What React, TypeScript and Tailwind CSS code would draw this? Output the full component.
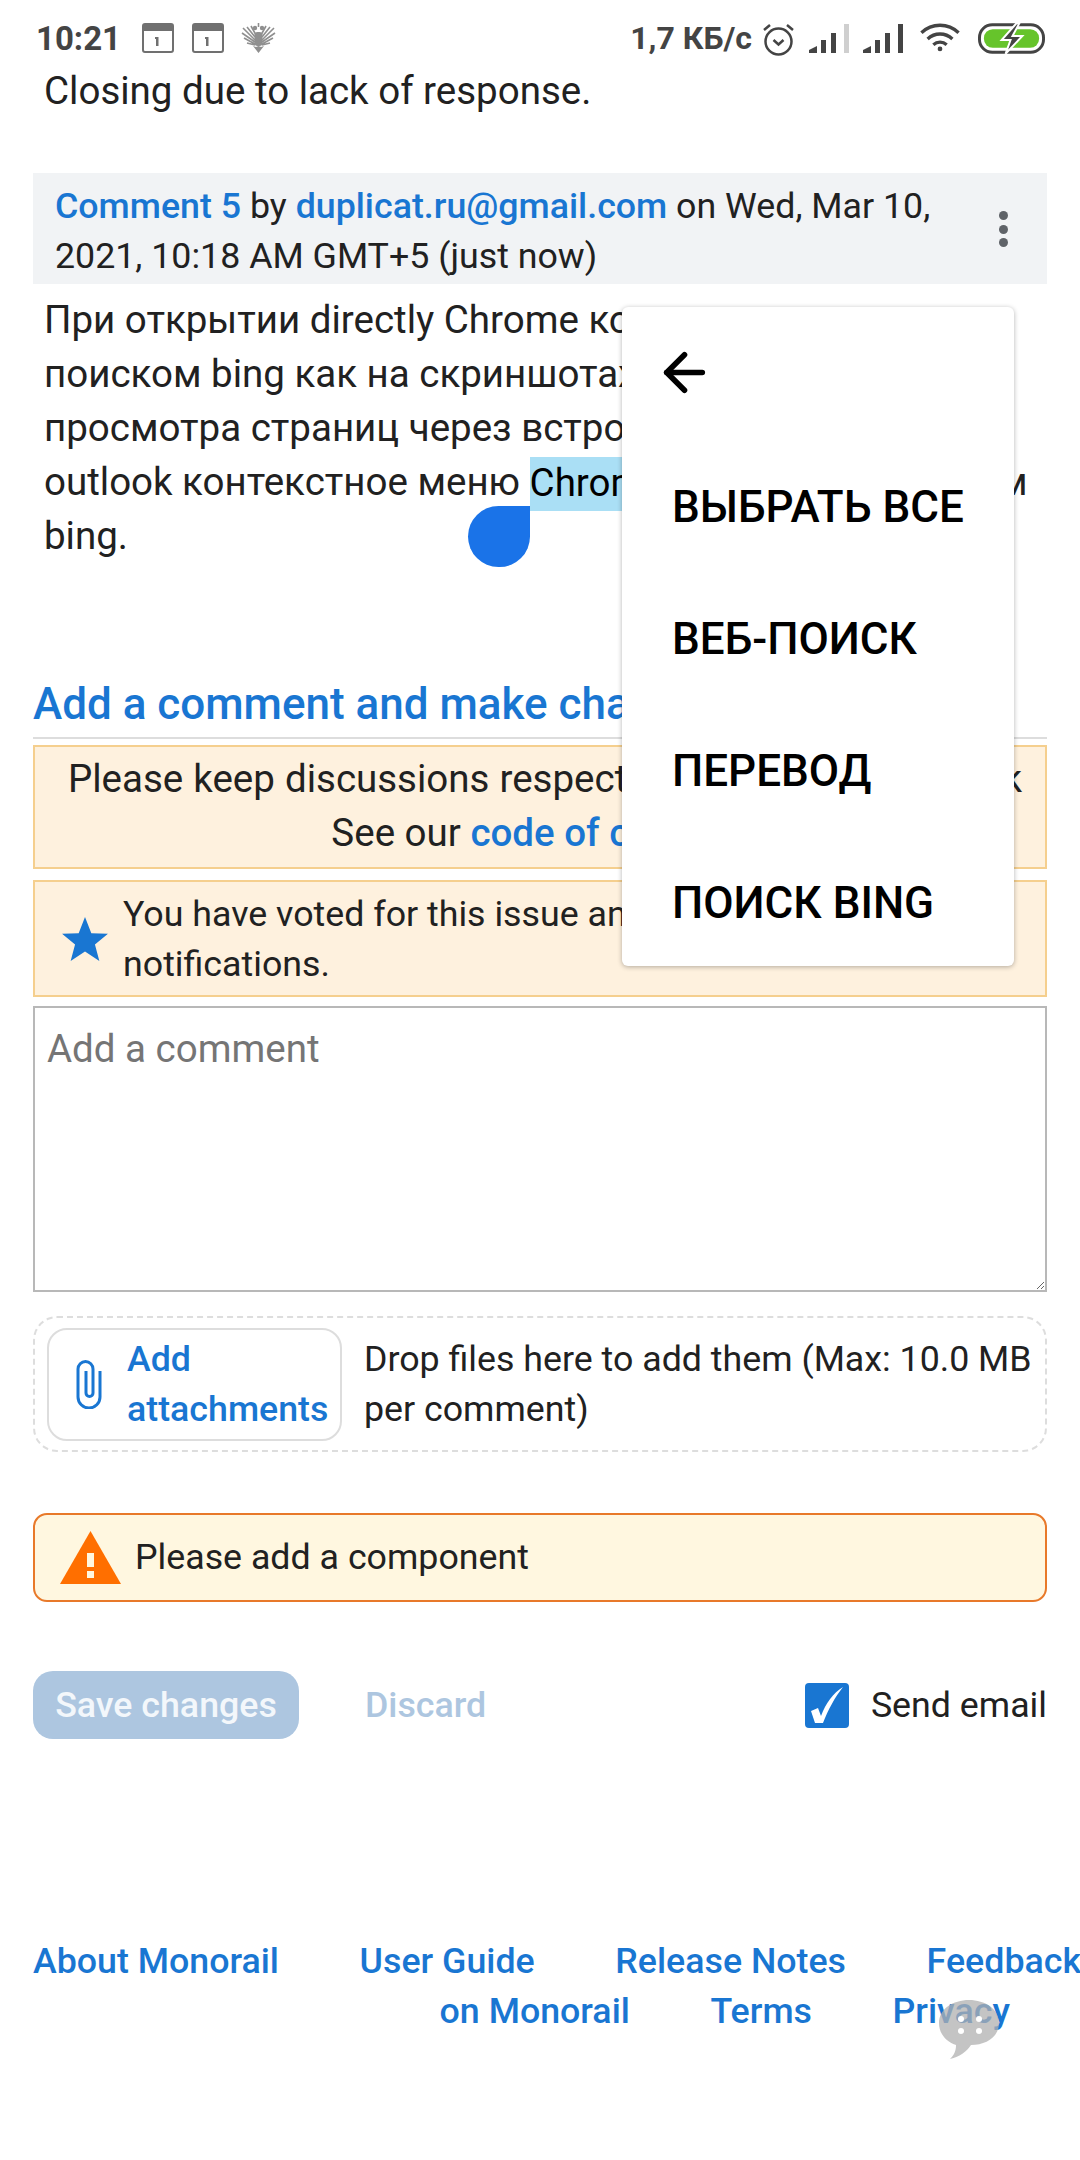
import { ArrowLeft } from "lucide-react";

const menuItems = ["ВЫБРАТЬ ВСЕ", "ВЕБ-ПОИСК", "ПЕРЕВОД", "ПОИСК BING"];

function CalendarIcon() {
  return (
    <svg width="32" height="30" viewBox="0 0 32 30">
      <rect x="1" y="1" width="30" height="28" rx="2" fill="none" stroke="#707070" strokeWidth="2" />
      <rect x="1" y="1" width="30" height="7" fill="#707070" />
      <path d="M13 14h3.500v9h-2.500v-7h-1z" fill="#707070" />
    </svg>
  );
}

function EagleIcon() {
  return (
    <svg width="35" height="30" viewBox="0 0 35 30" fill="none" stroke="#8f8f8f" strokeWidth="1.600">
      <path d="M14 17L2 5M14 19L1 10M14 21L3 15M14 22L6 20M14 14L6 4M15 12L10 3" />
      <path d="M21 17L33 5M21 19L34 10M21 21L32 15M21 22L29 20M21 14L29 4M20 12L25 3" />
      <rect x="13.500" y="9" width="8" height="14" rx="3" fill="#8f8f8f" stroke="none" />
      <circle cx="14" cy="5" r="2.200" fill="#8f8f8f" stroke="none" />
      <circle cx="21" cy="5" r="2.200" fill="#8f8f8f" stroke="none" />
      <path d="M17.500 0v4" />
      <path d="M12 23l5.500 7 5.500-7-3 1-2.500-1-2.500 1z" fill="#8f8f8f" stroke="none" />
    </svg>
  );
}

function AlarmIcon() {
  return (
    <svg width="33" height="33" viewBox="0 0 33 33" fill="none" stroke="#444" strokeWidth="2.500">
      <circle cx="16.500" cy="18.500" r="13" />
      <path d="M11.500 17l5 4.500 5-4.500" />
      <path d="M2 7l6-5M31 7l-6-5" />
    </svg>
  );
}

function SignalIcon({ faded }: { faded?: boolean }) {
  return (
    <svg width="40" height="29" viewBox="0 0 40 29" fill="#444">
      <path d="M0 29v-3l8-4v7z" />
      <rect x="12" y="16" width="5" height="13" />
      <rect x="22" y="9" width="5" height="20" />
      <rect x="35" y="0" width="5" height="29" fill={faded ? "#cfcfcf" : "#444"} />
    </svg>
  );
}

function WifiIcon() {
  return (
    <svg width="40" height="31" viewBox="0 0 42 32" fill="none" stroke="#444" strokeWidth="3.500">
      <path d="M1.500 10c11-10.500 28-10.500 39 0" />
      <path d="M8 16.500c7.500-7 18.500-7 26 0" />
      <path d="M14 22.500c4-3.500 10-3.500 14 0" />
      <circle cx="21" cy="27" r="2.500" fill="#444" stroke="none" />
    </svg>
  );
}

function BatteryIcon() {
  return (
    <svg width="67" height="31" viewBox="0 0 68 31">
      <rect x="1.500" y="1.500" width="65" height="28" rx="13" fill="none" stroke="#444" strokeWidth="3" />
      <rect x="6" y="6" width="56" height="19" rx="9" fill="#66c42b" />
      <path d="M39 0L24 17h9l-5 14 17-18h-10l7-13z" fill="#444" stroke="#fff" strokeWidth="2" />
    </svg>
  );
}

function StatusBar() {
  return (
    <div className="h-[64px] flex items-start pt-[23px] pl-[36px] pr-[35px] text-[#444]">
      <span className="text-[33px] leading-[31px] font-bold w-[106px]">10:21</span>
      <div className="flex gap-[18px]">
        <CalendarIcon />
        <CalendarIcon />
      </div>
      <div className="ml-[17px]">
        <EagleIcon />
      </div>
      <span className="ml-auto text-[32px] leading-[31px] font-bold">1,7 КБ/с</span>
      <div className="ml-[10px] flex">
        <AlarmIcon />
        <div className="ml-[14px] flex gap-[14px] pt-[1px]">
          <SignalIcon faded />
          <SignalIcon />
        </div>
        <div className="ml-[17px]">
          <WifiIcon />
        </div>
        <div className="ml-[18px]">
          <BatteryIcon />
        </div>
      </div>
    </div>
  );
}

export default function App() {
  return (
    <div className="relative w-[1080px] h-[2160px] overflow-hidden bg-white text-[#212121] font-['Roboto',sans-serif] text-[35.75px]">
      <StatusBar />

      <div className="px-[33px]">
        <p className="pl-[11px] text-[38.5px] leading-[54px]">Closing due to lack of response.</p>

        {/* comment header */}
        <div className="mt-[55px] h-[111px] bg-[#f1f3f5] pt-[8px] pl-[22px] flex items-start leading-[50px]">
          <div className="whitespace-nowrap">
            <a className="text-[#1976d2] font-medium">Comment 5</a> by{" "}
            <a className="text-[#1976d2] font-medium">duplicat.ru@gmail.com</a> on Wed, Mar 10,
            <br />
            2021, 10:18 AM GMT+5 (just now)
          </div>
          <div className="ml-auto mr-[39px] mt-[30px] flex flex-col gap-[4.500px]">
            <span className="w-[9px] h-[9px] rounded-full bg-[#5f6368]" />
            <span className="w-[9px] h-[9px] rounded-full bg-[#5f6368]" />
            <span className="w-[9px] h-[9px] rounded-full bg-[#5f6368]" />
          </div>
        </div>

        {/* comment body */}
        <div className="mt-[9px] pl-[11px] text-[38.5px] leading-[54px] whitespace-nowrap">
          При открытии directly Chrome контекстное меню с
          <br />
          поиском bing как на скриншотах, но при
          <br />
          просмотра страниц через встроенный в
          <br />
          outlook контекстное меню{" "}
          <span className="bg-[#aadff5] pt-[2.500px] pb-[6.500px] text-black">Chrome</span> то снова с поиском
          <br />
          bing.
        </div>

        <h2 className="mt-[116px] border-b-2 border-[#dddddd] pb-[8px] text-[44px] leading-[50px] font-medium text-[#1976d2] whitespace-nowrap">
          Add a comment and make changes
        </h2>

        <div className="mt-[6px] h-[124px] border-2 border-[#f5cf8e] bg-[#fef1de] pt-[5px] text-center text-[38.5px] leading-[54px] whitespace-nowrap">
          <span className="inline-block pl-[10px] [word-spacing:0.5px]">Please keep discussions respectful and always on track</span>
          <br />
          See our <a className="text-[#1976d2] font-medium">code of conduct</a>
        </div>

        <div className="mt-[11px] h-[117px] border-2 border-[#f5cf8e] bg-[#fef1de] flex items-center pl-[27px] gap-[15px] leading-[50px]">
          <svg width="46" height="44" viewBox="0 0 24 23" fill="#1976d2" className="shrink-0">
            <path d="M12 0l3.300 8.500 8.700.3-6.800 5.600 2.300 8.600-7.500-5-7.500 5 2.300-8.600L0 8.800l8.700-.3z" />
          </svg>
          <div className="whitespace-nowrap">
            You have voted for this issue and will receive
            <br />
            notifications.
          </div>
        </div>

        <textarea
          readOnly
          placeholder="Add a comment"
          className="mt-[9px] block w-full h-[286px] border-2 border-[#b8b8b8] px-[12px] pt-[19px] pb-[8px] text-[38.5px] leading-[44px] placeholder:text-[#757575]"
        />

        <div className="mt-[24px] h-[136px] border-2 border-dashed border-[#dddddd] rounded-[24px] flex items-center pl-[12px] gap-[22px] leading-[50px]">
          <button className="w-[295px] h-[113px] shrink-0 border-2 border-[#dddddd] rounded-[20px] flex items-center pl-[27px] gap-[25px] text-left text-[#1976d2] font-medium">
            <svg width="26" height="50" viewBox="0 0 26 50" fill="none" stroke="#1976d2" strokeWidth="3" className="shrink-0">
              <path d="M24 12v26a11 11 0 0 1-22 0V10a7.500 7.500 0 0 1 15 0v24a3.500 3.500 0 0 1-7 0V12" />
            </svg>
            <span>
              Add
              <br />
              attachments
            </span>
          </button>
          <div className="whitespace-nowrap">
            Drop files here to add them (Max: 10.0 MB
            <br />
            per comment)
          </div>
        </div>

        <div className="mt-[61px] h-[89px] border-2 border-[#e8792a] rounded-[14px] bg-[#fff7e0] flex items-center pl-[25px] gap-[14px]">
          <svg width="61" height="53" viewBox="0 0 61 53" className="shrink-0">
            <path d="M30.500 0L61 53H0z" fill="#ff6f00" />
            <rect x="27" y="22" width="7" height="14" fill="#fff7e0" />
            <rect x="27" y="40" width="7" height="7" fill="#fff7e0" />
          </svg>
          <span>Please add a component</span>
        </div>

        <div className="mt-[69px] h-[68px] flex items-center">
          <button className="w-[266px] h-[68px] rounded-[20px] bg-[#adc6e0] text-[#f3f7fb] font-medium pt-[1px]">
            Save changes
          </button>
          <span className="ml-[66px] text-[#adc6e0] font-medium pt-[1px]">Discard</span>
          <div className="ml-auto w-[44px] h-[45px] rounded-[4px] bg-[#1976d2] flex items-center justify-center">
            <svg width="36" height="40" viewBox="0 0 36 40" fill="#fff">
              <path d="M2 26l7-3 3 8C17 18 24 8 34 2c-8 10-15 23-20 36H6z" />
            </svg>
          </div>
          <span className="ml-[22px] pt-[1px]">Send email</span>
        </div>

        <div className="mt-[197px] leading-[50px] text-[#1976d2] font-medium whitespace-nowrap">
          <div className="flex gap-[80.600px]">
            <a>About Monorail</a>
            <a>User Guide</a>
            <a>Release Notes</a>
            <a>Feedback</a>
          </div>
          <div className="flex justify-end gap-[80.600px] pr-[37px]">
            <a>on Monorail</a>
            <a>Terms</a>
            <a>Privacy</a>
          </div>
        </div>
      </div>

      {/* selection handle */}
      <div className="absolute left-[468px] top-[506px] w-[62px] h-[61px] rounded-full rounded-tr-none bg-[#1a73e8]" />

      {/* text selection menu */}
      <div className="absolute left-[622px] top-[307px] w-[392px] h-[659px] rounded-[6px] bg-white shadow-[0_1px_5px_rgba(0,0,0,0.3)]">
        <ArrowLeft size={61} strokeWidth={2.200} color="#000" className="absolute left-[32px] top-[35px]" />
        <div className="absolute left-[50px] top-[134px] flex flex-col text-[44px] leading-[132px] font-medium text-black whitespace-nowrap">
          {menuItems.map((item) => (
            <span key={item}>{item}</span>
          ))}
        </div>
      </div>

      {/* floating chat bubble */}
      <svg width="62" height="60" viewBox="0 0 62 60" className="absolute left-[938px] top-[2000px]">
        <path
          d="M31 0c16 0 30 9 30 23S48 45 33 45c-4 6-11 12-21 14 4-4 6-8 6-14C7 41 1 33 1 23 1 9 15 0 31 0z"
          fill="#b0b0b0"
          fillOpacity="0.75"
        />
        <circle cx="23" cy="19" r="3" fill="#fff" />
        <circle cx="41" cy="19" r="3" fill="#fff" />
        <circle cx="23" cy="31" r="3" fill="#fff" />
        <circle cx="41" cy="31" r="3" fill="#fff" />
      </svg>
    </div>
  );
}
